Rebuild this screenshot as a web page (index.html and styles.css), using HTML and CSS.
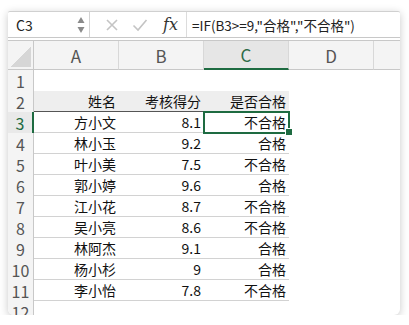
FILE: index.html
```html
<!DOCTYPE html>
<html lang="en">
<head>
    <meta charset="UTF-8">
    <title>Excel IF</title>
    <link rel="stylesheet" href="styles.css">
</head>
<body>
    <div class="window">
        <div class="formula-bar">
            <div class="name-box">
                <span>C3</span>
                <span class="spinner">
                    <svg width="8" height="18" viewBox="0 0 8 18"><path d="M4 1 L7.5 7 L0.5 7 Z" fill="#8a8a8a"/><path d="M4 17 L7.5 11 L0.5 11 Z" fill="#8a8a8a"/></svg>
                </span>
            </div>
            <div class="fb-icons">
                <svg class="fb-icon" width="14" height="14" viewBox="0 0 14 14"><path d="M2 2 L12 12 M12 2 L2 12" stroke="#c4c4c4" stroke-width="1.6" fill="none"/></svg>
                <svg class="fb-icon" width="16" height="14" viewBox="0 0 16 14"><path d="M1.5 7.5 L6 12 L14.5 2" stroke="#c4c4c4" stroke-width="1.6" fill="none"/></svg>
                <span class="fx">fx</span>
            </div>
            <div class="formula">=IF(B3&gt;=9,"合格","不合格")</div>
        </div>
        <div class="sheet">
            <div class="hd corner"></div>
            <div class="hd col">A</div>
            <div class="hd col">B</div>
            <div class="hd col active">C</div>
            <div class="hd col">D</div>
            <div class="hd col last"></div>

            <div class="rh">1</div><div class="c"></div><div class="c"></div><div class="c"></div><div class="c"></div><div class="c"></div>

            <div class="rh">2</div>
            <div class="c th">姓名</div><div class="c th">考核得分</div><div class="c th">是否合格</div>
            <div class="c"></div><div class="c"></div>

            <div class="rh active">3</div>
            <div class="c td">方小文</div><div class="c td">8.1</div><div class="c td sel">不合格</div>
            <div class="c"></div><div class="c"></div>

            <div class="rh">4</div>
            <div class="c td">林小玉</div><div class="c td">9.2</div><div class="c td">合格</div>
            <div class="c"></div><div class="c"></div>

            <div class="rh">5</div>
            <div class="c td">叶小美</div><div class="c td">7.5</div><div class="c td">不合格</div>
            <div class="c"></div><div class="c"></div>

            <div class="rh">6</div>
            <div class="c td">郭小婷</div><div class="c td">9.6</div><div class="c td">合格</div>
            <div class="c"></div><div class="c"></div>

            <div class="rh">7</div>
            <div class="c td">江小花</div><div class="c td">8.7</div><div class="c td">不合格</div>
            <div class="c"></div><div class="c"></div>

            <div class="rh">8</div>
            <div class="c td">吴小亮</div><div class="c td">8.6</div><div class="c td">不合格</div>
            <div class="c"></div><div class="c"></div>

            <div class="rh">9</div>
            <div class="c td">林阿杰</div><div class="c td">9.1</div><div class="c td">合格</div>
            <div class="c"></div><div class="c"></div>

            <div class="rh">10</div>
            <div class="c td">杨小杉</div><div class="c td">9</div><div class="c td">合格</div>
            <div class="c"></div><div class="c"></div>

            <div class="rh">11</div>
            <div class="c td">李小怡</div><div class="c td">7.8</div><div class="c td">不合格</div>
            <div class="c"></div><div class="c"></div>

            <div class="rh">12</div><div class="c"></div><div class="c"></div><div class="c"></div><div class="c"></div><div class="c"></div>
        </div>
    </div>
</body>
</html>
```

FILE: styles.css
```css
body, html {
    margin: 0;
    padding: 0;
    background: #ffffff;
    font-family: "Noto Sans CJK SC", "Noto Sans", sans-serif;
}
.window {
    margin: 11px 0 0 8px;
    width: 392px;
    height: 304px;
    background: #ffffff;
    border-top: 1px solid #d0d0d0;
    border-radius: 2px 2px 6px 6px;
    box-shadow: 0 2px 8px rgba(0, 0, 0, 0.22);
    overflow: hidden;
    box-sizing: border-box;
}
.formula-bar {
    display: flex;
    align-items: center;
    height: 26px;
    border-bottom: 1px solid #c8c8c8;
    box-sizing: border-box;
}
.name-box {
    width: 82px;
    height: 100%;
    display: flex;
    align-items: center;
    justify-content: space-between;
    padding: 0 4px 0 8px;
    box-sizing: border-box;
    border-right: 1px solid #d4d4d4;
    font-size: 14px;
    color: #222;
}
.spinner {
    display: flex;
    align-items: center;
}
.fb-icons {
    display: flex;
    align-items: center;
    width: 97px;
    height: 100%;
    padding-left: 15px;
    box-sizing: border-box;
    gap: 13px;
    border-right: 1px solid #dcdcdc;
}
.fx {
    font-family: "DejaVu Serif", "Liberation Serif", serif;
    font-style: italic;
    font-size: 16px;
    color: #333;
    margin-left: 2px;
}
.formula {
    padding-left: 5px;
    font-size: 13.5px;
    color: #222;
    white-space: nowrap;
}
.sheet {
    margin-top: 2px;
    border-top: 1px solid #c8c8c8;
    display: grid;
    grid-template-columns: 26px 85px 85px 85px 85px 1fr;
    grid-template-rows: 29px repeat(12, 21px);
    line-height: 1;
}
.hd {
    background: #f4f4f4;
    border-right: 1px solid #d8d8d8;
    border-bottom: 1px solid #c8c8c8;
    box-sizing: border-box;
}
.corner {
    position: relative;
    border-right: 1px solid #c8c8c8;
}
.corner::after {
    content: "";
    position: absolute;
    right: 2px;
    bottom: 2px;
    width: 21px;
    height: 21px;
    background: linear-gradient(to top left, #d6d6d6 50%, transparent 50%);
}
.col {
    display: flex;
    align-items: center;
    justify-content: center;
    font-size: 17px;
    color: #555;
}
.col.active {
    background: #e6e6e6;
    color: #2e6a48;
    border-bottom: 2px solid #1e6b41;
}
.col.last {
    border-right: none;
}
.rh {
    background: #f4f4f4;
    border-right: 1px solid #c8c8c8;
    box-sizing: border-box;
    display: flex;
    align-items: center;
    justify-content: center;
    font-size: 16px;
    color: #555;
}
.rh.active {
    color: #1e6b41;
    background: #e9e9e9;
    border-right: 2px solid #1e6b41;
}
.c {
    box-sizing: border-box;
    display: flex;
    align-items: center;
    justify-content: flex-end;
    padding-right: 3px;
    font-size: 14px;
    color: #111;
}
.th {
    background: #eeeeee;
    border-bottom: 1px solid #555;
}
.td {
    border-bottom: 1px solid #d2d2d2;
}
.sel {
    position: relative;
    outline: 2px solid #1e6b41;
    outline-offset: -1px;
    z-index: 1;
}
.sel::after {
    content: "";
    position: absolute;
    right: -4px;
    bottom: -4px;
    width: 6px;
    height: 6px;
    background: #1e6b41;
    border: 1px solid #ffffff;
}
```
